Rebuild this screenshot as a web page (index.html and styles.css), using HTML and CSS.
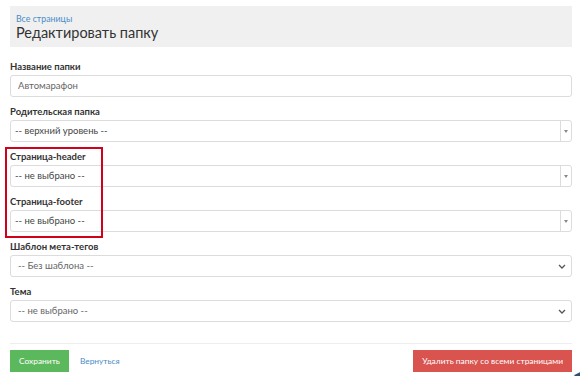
FILE: index.html
```html
<html>
<head>
    <meta charset="utf-8">
    <link rel="stylesheet" href="styles.css">
</head>
<body>
    <div class="page">
        <div class="page-header">
            <a class="crumb" href="#">Все страницы</a>
            <h1>Редактировать папку</h1>
        </div>

        <div class="form">
            <div class="group">
                <label>Название папки</label>
                <div class="control">Автомарафон</div>
            </div>
            <div class="group">
                <label>Родительская папка</label>
                <div class="control s2">-- верхний уровень --<span class="s2-arrow"><span class="tri"></span></span></div>
            </div>
            <div class="group">
                <label>Страница-header</label>
                <div class="control s2">-- не выбрано --<span class="s2-arrow"><span class="tri"></span></span></div>
            </div>
            <div class="group">
                <label>Страница-footer</label>
                <div class="control s2">-- не выбрано --<span class="s2-arrow"><span class="tri"></span></span></div>
            </div>
            <div class="group">
                <label>Шаблон мета-тегов</label>
                <div class="control native">-- Без шаблона --
                    <svg class="chev" width="8" height="5" viewBox="0 0 8 5"><path d="M1 1l3 3 3-3" fill="none" stroke="#555" stroke-width="1.3"/></svg>
                </div>
            </div>
            <div class="group">
                <label>Тема</label>
                <div class="control native">-- не выбрано --
                    <svg class="chev" width="8" height="5" viewBox="0 0 8 5"><path d="M1 1l3 3 3-3" fill="none" stroke="#555" stroke-width="1.3"/></svg>
                </div>
            </div>
            <div class="mark"></div>
        </div>

        <div class="actions">
            <a class="btn btn-green" href="#">Сохранить</a>
            <a class="back" href="#">Вернуться</a>
            <a class="btn btn-red" href="#">Удалить папку со всеми страницами</a>
        </div>
    </div>
    <div class="chat"></div>
</body>
</html>
```

FILE: styles.css
```css
html, body{
    margin: 0;
    padding: 0;
    width: 100%;
    height: 100%;
    overflow: hidden;
}
body{
    font-family: Lato, "Liberation Sans", sans-serif;
    font-size: 9.5px;
    color: #333;
    background: #fff;
}
.page{
    padding: 6px 8px 0 10px;
}
.page-header{
    height: 41px;
    background: #f0f0f0;
    padding: 8px 6px 0;
    box-sizing: border-box;
}
.crumb{
    display: block;
    color: #4a8cc7;
    text-decoration: none;
    font-size: 8.8px;
    line-height: 10px;
}
h1{
    margin: 0;
    font-size: 14.5px;
    font-weight: normal;
    color: #333;
    line-height: 18px;
}
.form{
    position: relative;
    padding-top: 14px;
}
.group{
    margin-bottom: 9px;
}
label{
    display: block;
    font-weight: bold;
    line-height: 12px;
    margin-bottom: 2px;
    color: #333;
}
.control{
    position: relative;
    height: 22px;
    line-height: 20px;
    box-sizing: border-box;
    border: 1px solid #dcdcdc;
    border-radius: 3px;
    padding: 0 7px;
    color: #666;
}
.s2{
    padding-left: 4px;
    color: #444;
}
.s2-arrow{
    position: absolute;
    right: 0;
    top: 0;
    bottom: 0;
    width: 10px;
    border-left: 1px solid #dcdcdc;
}
.tri{
    position: absolute;
    left: 3px;
    top: 9px;
    border-left: 2px solid transparent;
    border-right: 2px solid transparent;
    border-top: 3px solid #888;
}
.chev{
    position: absolute;
    right: 5px;
    top: 8px;
}
.mark{
    position: absolute;
    left: -5px;
    top: 100px;
    width: 94px;
    height: 87px;
    border: 2px solid #d0021b;
}
.actions{
    display: flex;
    align-items: center;
    border-top: 1px solid #eee;
    margin-top: 21px;
    padding-top: 6px;
}
.btn{
    display: block;
    height: 22px;
    line-height: 22px;
    padding: 0 9px;
    font-size: 8.4px;
    color: #fff;
    text-decoration: none;
}
.btn-green{
    background: #5cb85c;
}
.btn-red{
    margin-left: auto;
    background: #d9534f;
}
.back{
    margin-left: 11px;
    font-size: 8.4px;
    color: #4a8cc7;
    text-decoration: none;
}
.chat{
    position: absolute;
    left: 567px;
    top: 371px;
    width: 40px;
    height: 40px;
    border-radius: 50%;
    background: #2e4f73;
}
```
